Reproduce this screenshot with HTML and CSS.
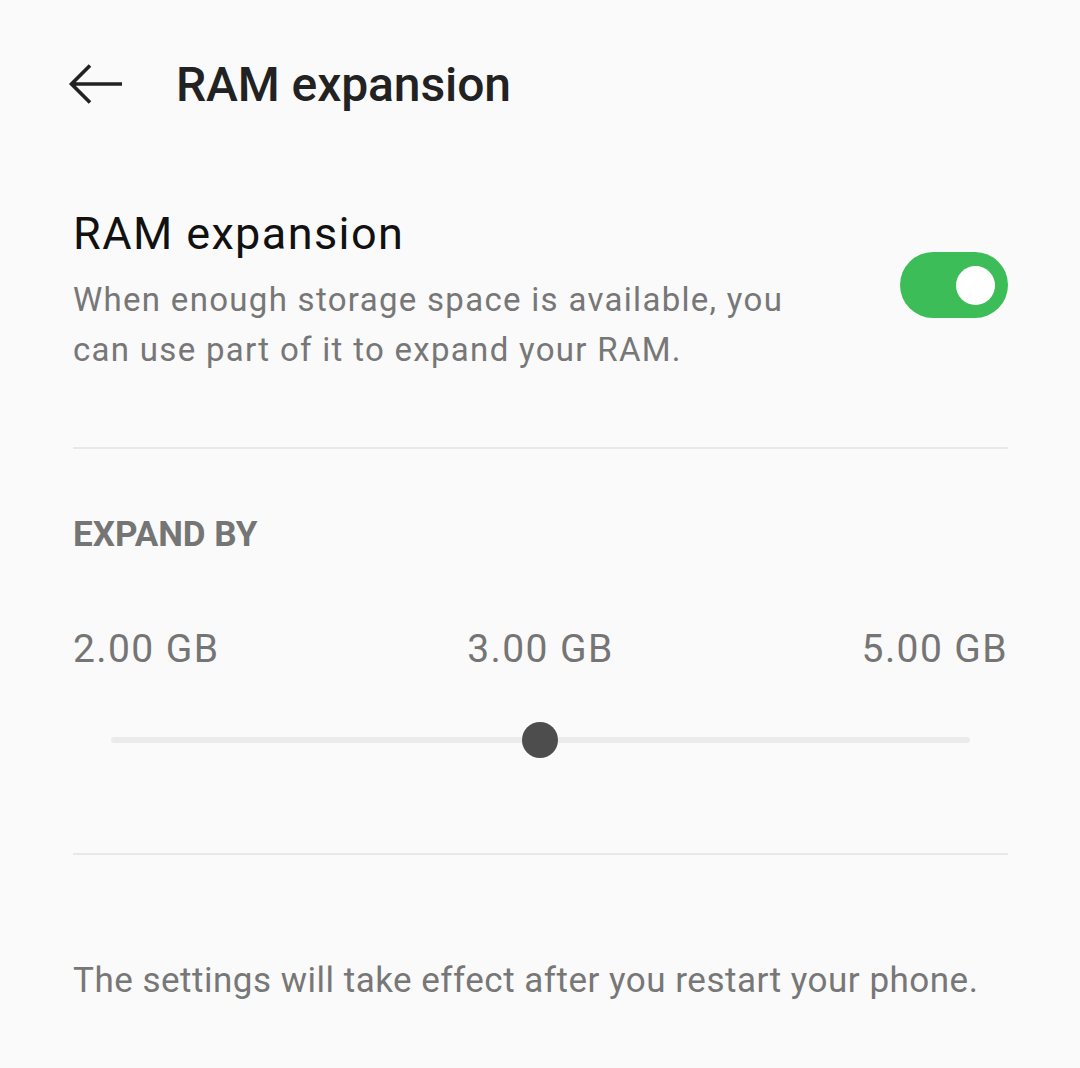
FILE: index.html
```html
<!DOCTYPE html>
<html>
<head>
<meta charset="utf-8">
<link rel="stylesheet" href="styles.css">
</head>
<body>
<div class="page">
  <header class="topbar">
    <svg class="back" width="56" height="42" viewBox="0 0 56 42">
      <path d="M3 21 H54 M22 2.5 L3.5 21 L22 39.5" fill="none" stroke="#222" stroke-width="3.6" stroke-linecap="butt" stroke-linejoin="miter"/>
    </svg>
    <h1 class="title">RAM expansion</h1>
  </header>

  <section class="toggle-row">
    <div class="toggle-text">
      <div class="row-title">RAM expansion</div>
      <div class="row-desc">When enough storage space is available, you can use part of it to expand your RAM.</div>
    </div>
    <div class="switch"><div class="knob"></div></div>
  </section>

  <div class="divider"></div>

  <section class="expand">
    <div class="section-label">EXPAND BY</div>
    <div class="values">
      <span>2.00 GB</span>
      <span>3.00 GB</span>
      <span>5.00 GB</span>
    </div>
    <div class="slider">
      <div class="track"></div>
      <div class="thumb"></div>
    </div>
  </section>

  <div class="divider"></div>

  <p class="note">The settings will take effect after you restart your phone.</p>
</div>
</body>
</html>
```

FILE: styles.css
```css
html, body {
  margin: 0;
  padding: 0;
  background: #fafafa;
}
body {
  font-family: Roboto, "Noto Sans", sans-serif;
  width: 1080px;
  height: 1068px;
  overflow: hidden;
}
.page {
  padding: 0 72px 0 73px;
}
.topbar {
  display: flex;
  align-items: center;
  height: 170px;
  margin-left: -5px;
}
.back {
  display: block;
  margin-top: -2px;
}
.title {
  margin: 0 0 0 52px;
  font-size: 48px;
  line-height: 56px;
  font-weight: 500;
  color: #222;
  letter-spacing: -0.1px;
}
.toggle-row {
  display: flex;
  align-items: flex-start;
  justify-content: space-between;
  padding-top: 36px;
  height: 277px;
  box-sizing: border-box;
}
.toggle-text {
  width: 760px;
}
.row-title {
  font-size: 45px;
  color: #111;
  line-height: 56px;
  letter-spacing: 1.4px;
}
.row-desc {
  font-size: 33px;
  color: #777;
  line-height: 50px;
  margin-top: 13px;
  letter-spacing: 1.3px;
}
.switch {
  width: 108px;
  height: 66px;
  border-radius: 33px;
  background: #3cbd57;
  margin-top: 46px;
  display: flex;
  align-items: center;
  justify-content: flex-end;
  padding-right: 13px;
  box-sizing: border-box;
  flex-shrink: 0;
}
.knob {
  width: 39px;
  height: 39px;
  border-radius: 50%;
  background: #fff;
}
.divider {
  height: 2px;
  background: #e8e8e8;
}
.expand {
  height: 404px;
  box-sizing: border-box;
  padding-top: 65px;
}
.section-label {
  font-size: 35px;
  font-weight: 700;
  color: #757575;
  line-height: 42px;
}
.values {
  display: flex;
  justify-content: space-between;
  margin-top: 69px;
  font-size: 39px;
  color: #757575;
  line-height: 48px;
  letter-spacing: 1.4px;
}
.slider {
  position: relative;
  margin: 47px 38px 0 38px;
  height: 40px;
}
.track {
  position: absolute;
  left: 0;
  right: 0;
  top: 17px;
  height: 6px;
  border-radius: 3px;
  background: #ebebeb;
}
.thumb {
  position: absolute;
  left: 411px;
  top: 2px;
  width: 36px;
  height: 36px;
  border-radius: 50%;
  background: #4d4d4d;
}
.note {
  margin: 104px 0 0 0;
  font-size: 35px;
  color: #777;
  line-height: 44px;
  letter-spacing: 0.5px;
  white-space: nowrap;
}
```
